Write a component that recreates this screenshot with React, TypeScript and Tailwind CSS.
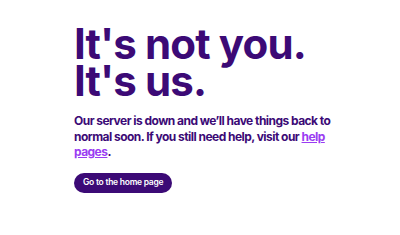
export default function App() {
  return (
    <div className="min-h-screen bg-white font-['Inter',sans-serif] text-[#3c0a76]">
      <div className="px-[74px] pt-[25px]">
        <h1 className="whitespace-nowrap text-[42px] font-bold leading-[37px] tracking-[-0.02em]">
          It's not you.
          <br />
          It's us.
        </h1>
        <p className="mt-[14px] w-[262px] text-[12px] font-bold leading-[15.5px] tracking-[-0.045em]">
          Our server is down and we’ll have things back to normal soon. If you
          still need help, visit our{' '}
          <a href="#" className="text-[#9a3cf2] underline">
            help pages
          </a>
          .
        </p>
        <button className="mt-[13px] h-[20px] rounded-full bg-[#3c0a76] px-[9px] text-[8.5px] font-semibold tracking-[-0.03em] text-white">
          Go to the home page
        </button>
      </div>
    </div>
  );
}
